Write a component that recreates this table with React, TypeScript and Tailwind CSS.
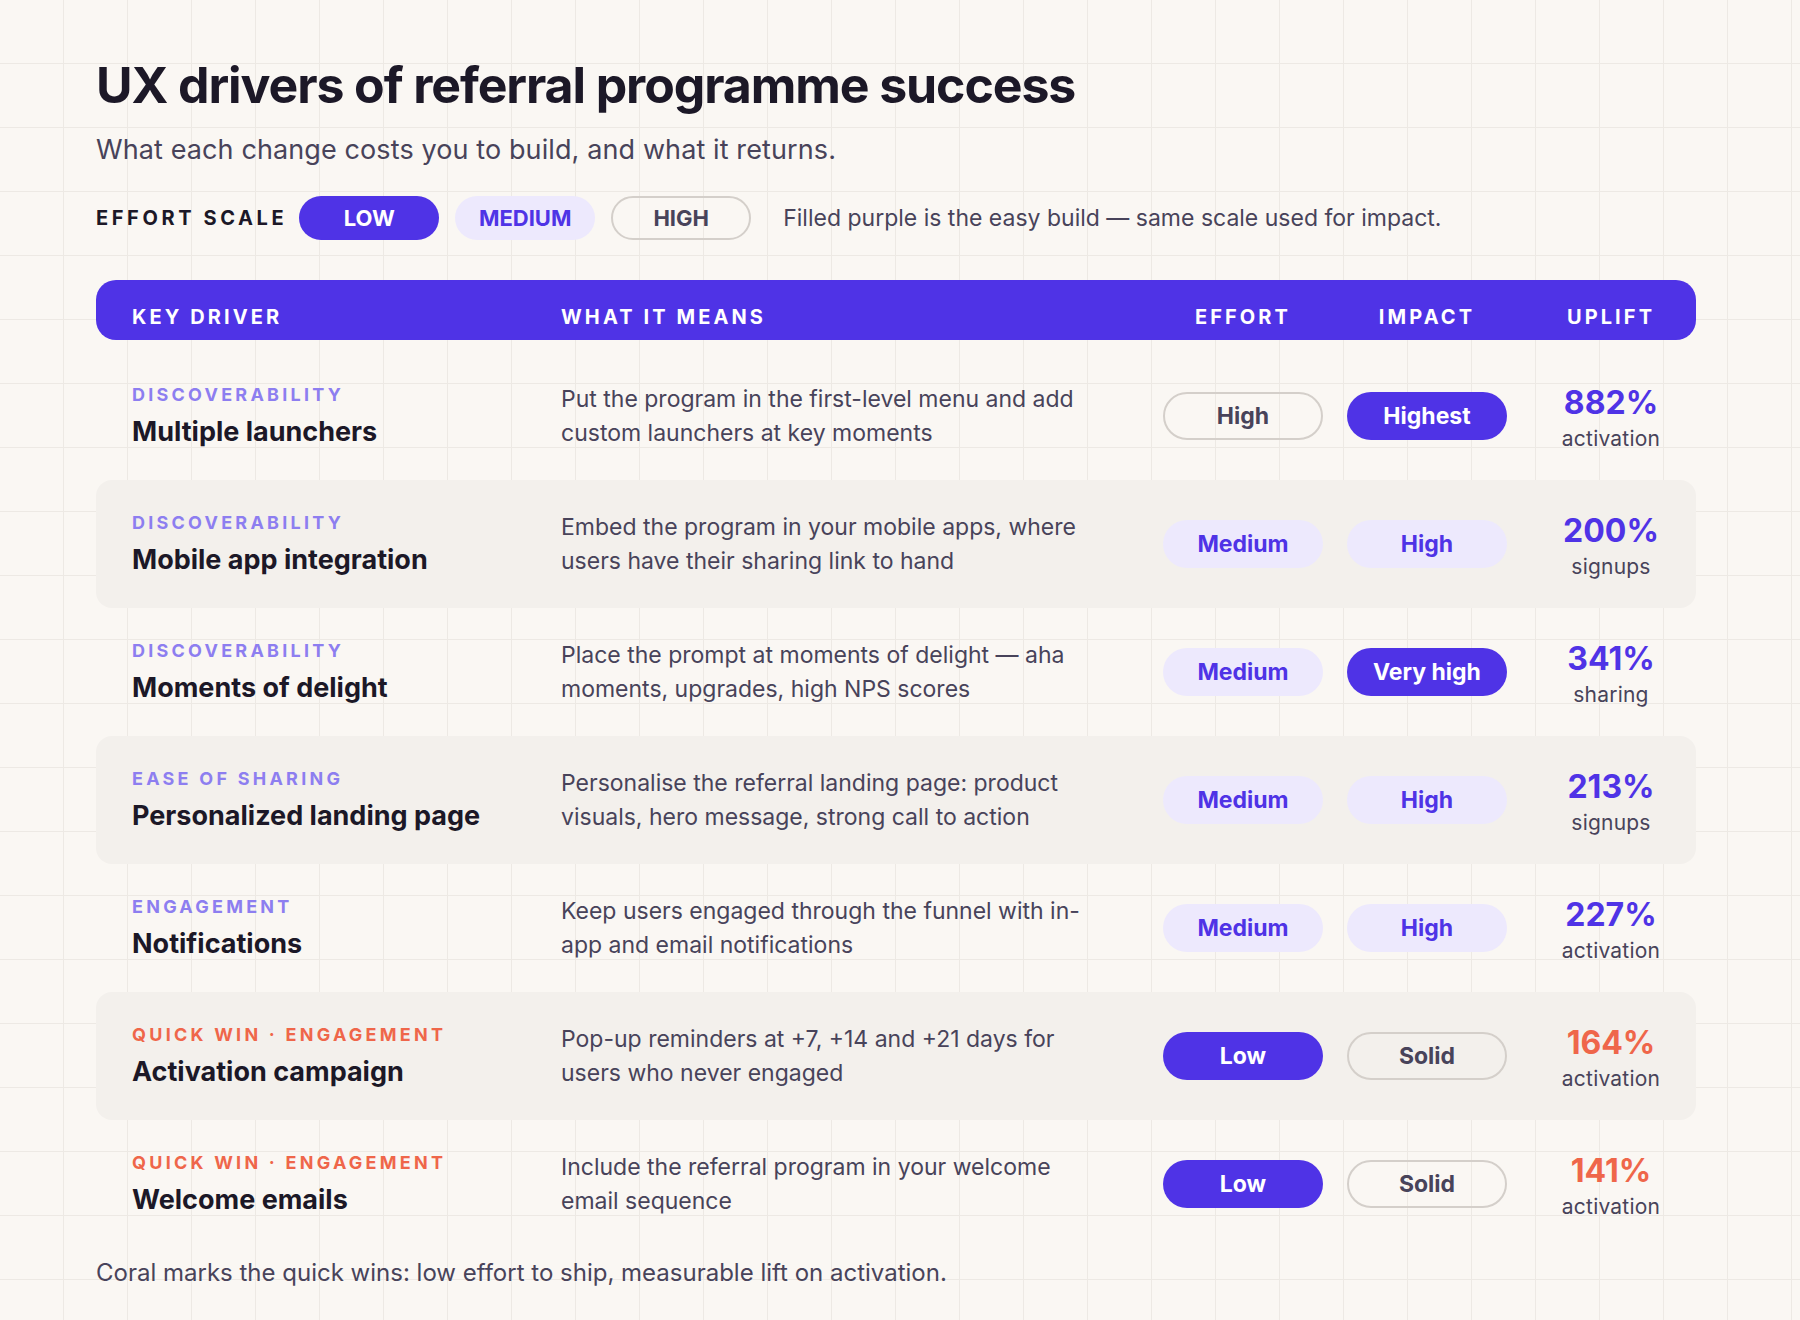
import type { ReactNode } from "react";

type Tone = "filled" | "light" | "outline";

type Row = {
  tag: string;
  quick?: boolean;
  name: string;
  desc: string;
  effort: [string, Tone];
  impact: [string, Tone];
  uplift: string;
  metric: string;
};

const ROWS: Row[] = [
  {
    tag: "Discoverability",
    name: "Multiple launchers",
    desc: "Put the program in the first-level menu and add custom launchers at key moments",
    effort: ["High", "outline"],
    impact: ["Highest", "filled"],
    uplift: "882%",
    metric: "activation",
  },
  {
    tag: "Discoverability",
    name: "Mobile app integration",
    desc: "Embed the program in your mobile apps, where users have their sharing link to hand",
    effort: ["Medium", "light"],
    impact: ["High", "light"],
    uplift: "200%",
    metric: "signups",
  },
  {
    tag: "Discoverability",
    name: "Moments of delight",
    desc: "Place the prompt at moments of delight — aha moments, upgrades, high NPS scores",
    effort: ["Medium", "light"],
    impact: ["Very high", "filled"],
    uplift: "341%",
    metric: "sharing",
  },
  {
    tag: "Ease of sharing",
    name: "Personalized landing page",
    desc: "Personalise the referral landing page: product visuals, hero message, strong call to action",
    effort: ["Medium", "light"],
    impact: ["High", "light"],
    uplift: "213%",
    metric: "signups",
  },
  {
    tag: "Engagement",
    name: "Notifications",
    desc: "Keep users engaged through the funnel with in-app and email notifications",
    effort: ["Medium", "light"],
    impact: ["High", "light"],
    uplift: "227%",
    metric: "activation",
  },
  {
    tag: "Quick win · Engagement",
    quick: true,
    name: "Activation campaign",
    desc: "Pop-up reminders at +7, +14 and +21 days for users who never engaged",
    effort: ["Low", "filled"],
    impact: ["Solid", "outline"],
    uplift: "164%",
    metric: "activation",
  },
  {
    tag: "Quick win · Engagement",
    quick: true,
    name: "Welcome emails",
    desc: "Include the referral program in your welcome email sequence",
    effort: ["Low", "filled"],
    impact: ["Solid", "outline"],
    uplift: "141%",
    metric: "activation",
  },
];

const TONE: Record<Tone, string> = {
  filled: "bg-[#4f33e6] text-white",
  light: "bg-[#ede9fd] text-[#4f33e6]",
  outline: "border-2 border-[#d4cfca] text-[#48435a]",
};

function Pill({ tone, children }: { tone: Tone; children: ReactNode }) {
  return (
    <div className={`flex h-12 w-40 items-center justify-center rounded-full text-[23px] font-bold ${TONE[tone]}`}>
      {children}
    </div>
  );
}

function ScalePill({ tone, children }: { tone: Tone; children: ReactNode }) {
  return (
    <div className={`flex h-11 w-[140px] items-center justify-center rounded-full text-[22px] font-bold uppercase ${TONE[tone]}`}>
      {children}
    </div>
  );
}

export default function App() {
  return (
    <div className="min-h-screen bg-[#faf7f3] bg-[linear-gradient(to_right,#ede9e4_1px,transparent_1px),linear-gradient(to_bottom,#ede9e4_1px,transparent_1px)] bg-[size:64px_64px] bg-[position:-1px_-1px] px-24 pt-[58px] pb-10 font-['Inter',sans-serif] text-[#1c1827]">
      <h1 className="text-[50px] leading-[55px] font-bold tracking-[-0.022em] text-[#1c1827]">
        UX drivers of referral programme success
      </h1>
      <p className="mt-[19px] text-[27px] leading-[36px] tracking-[0.004em] text-[#48435a]">
        What each change costs you to build, and what it returns.
      </p>

      {/* effort legend */}
      <div className="mt-7 flex items-center gap-4">
        <span className="-mr-1 text-[20px] font-bold uppercase tracking-[0.18em] text-[#1c1827]">Effort scale</span>
        <ScalePill tone="filled">Low</ScalePill>
        <ScalePill tone="light">Medium</ScalePill>
        <ScalePill tone="outline">High</ScalePill>
        <span className="ml-4 text-[23px] text-[#48435a]">
          Filled purple is the easy build — same scale used for impact.
        </span>
      </div>

      <div className="mt-10 w-[1600px]">
        <div className="grid h-[60px] grid-cols-[405px_578px_160px_160px_160px] items-end gap-x-6 rounded-[20px] bg-[#4f33e6] pr-[5px] pb-[13px] pl-9 text-[20px] leading-none font-bold tracking-[0.155em] text-white uppercase">
          <span>Key driver</span>
          <span>What it means</span>
          <span className="text-center">Effort</span>
          <span className="text-center">Impact</span>
          <span className="text-center">Uplift</span>
        </div>

        <div className="mt-3">
          {ROWS.map((r, i) => (
            <div
              key={r.name}
              className={`grid h-32 grid-cols-[405px_578px_160px_160px_160px] items-center gap-x-6 rounded-2xl pr-[5px] pl-9 ${
                i % 2 === 1 ? "bg-[#f3f0ec]" : ""
              }`}
            >
              <div>
                <div
                  className={`text-[18px] leading-[22px] font-bold tracking-[0.18em] uppercase ${
                    r.quick ? "text-[#ef664a]" : "text-[#8d7ef0]"
                  }`}
                >
                  {r.tag}
                </div>
                <div className="mt-2.5 text-[27px] leading-[32px] font-bold text-[#1c1827]">{r.name}</div>
              </div>
              <p className="max-w-[525px] text-[23px] leading-[34px] text-[#48435a]">{r.desc}</p>
              <Pill tone={r.effort[1]}>{r.effort[0]}</Pill>
              <Pill tone={r.impact[1]}>{r.impact[0]}</Pill>
              <div className="pt-[5px] text-center">
                <div className={`text-[32px] leading-[36px] font-bold ${r.quick ? "text-[#ef664a]" : "text-[#4f33e6]"}`}>
                  {r.uplift}
                </div>
                <div className="mt-[5px] text-[21px] leading-[26px] tracking-[0.01em] text-[#48435a]">{r.metric}</div>
              </div>
            </div>
          ))}
        </div>
      </div>

      <p className="mt-[10px] text-[24px] leading-[30px] text-[#48435a]">
        Coral marks the quick wins: low effort to ship, measurable lift on activation.
      </p>
    </div>
  );
}
